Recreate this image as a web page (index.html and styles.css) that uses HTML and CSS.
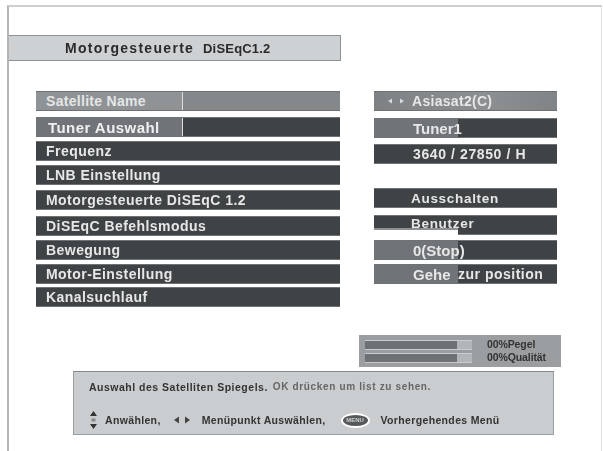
FILE: index.html
```html
<!DOCTYPE html>
<html lang="de">
<head>
<meta charset="utf-8">
<title>Motorgesteuerte DiSEqC1.2</title>
<link rel="stylesheet" href="styles.css">
</head>
<body>
<main class="frame">
  <header class="title"><span class="title-main">Motorgesteuerte</span><span class="title-sub">DiSEqC1.2</span></header>
  <section class="menu">
    <div class="labels">
      <div class="row row-light"><span class="part part-light big1">Satellite Name</span></div>
      <div class="row"><span class="part part-mid big2">Tuner Auswahl</span></div>
      <div class="row"><span class="plain">Frequenz</span></div>
      <div class="row"><span class="plain">LNB Einstellung</span></div>
      <div class="row"><span class="plain">Motorgesteuerte DiSEqC 1.2</span></div>
      <div class="row"><span class="plain">DiSEqC Befehlsmodus</span></div>
      <div class="row"><span class="plain">Bewegung</span></div>
      <div class="row"><span class="plain">Motor-Einstellung</span></div>
      <div class="row"><span class="plain">Kanalsuchlauf</span></div>
    </div>
    <div class="values">
      <div class="row row-light grad"><svg class="dots" viewBox="0 0 18 6" width="18" height="6"><path d="M1 3l4-2.500v5zM17 3l-4-2.500v5z" fill="#d8dadb"/></svg><span class="val val-first">Asiasat2(C)</span></div>
      <div class="row"><span class="seg"><span class="val big">Tuner1</span></span></div>
      <div class="row"><span class="val val-freq">3640 / 27850 / H</span></div>
      <div class="row"><span class="val val-a">Ausschalten</span></div>
      <div class="row row-clip"><span class="val val-a val-up">Benutzer</span><span class="clip"></span></div>
      <div class="row"><span class="seg"><span class="val big">0(Stop)</span></span></div>
      <div class="row"><span class="seg"><span class="val big">Gehe</span></span><span class="rest">zur position</span></div>
    </div>
  </section>
  <section class="signal">
    <div class="bars"><div class="bar"><i></i></div><div class="bar"><i></i></div></div>
    <div class="signal-text"><span>00%Pegel</span><span>00%Qualität</span></div>
  </section>
  <section class="help">
    <p class="help-line"><b>Auswahl des Satelliten Spiegels.</b><span class="soft">OK drücken um list zu sehen.</span></p>
    <p class="help-keys">
      <svg class="ico" viewBox="0 0 9 20" width="9" height="20"><path d="M4.500 1L8 6H1zM1 14h7l-3.500 5z" fill="#333"/><rect x="2.500" y="8.500" width="4" height="3" fill="#888"/></svg>
      <b class="k1">Anwählen,</b>
      <svg class="ico i2" viewBox="0 0 18 8" width="18" height="8"><path d="M1 4l5-3.500v7zM17 4l-5-3.500v7z" fill="#444"/></svg>
      <b class="k2">Menüpunkt Auswählen,</b>
      <span class="oval">MENU</span>
      <b>Vorhergehendes Menü</b>
    </p>
  </section>
</main>
</body>
</html>
```
FILE: styles.css
```css
* { box-sizing: border-box; }
html, body { margin: 0; background: #fff; }
body { width: 603px; height: 451px; overflow: hidden; font-family: "Liberation Sans", Arial, sans-serif; }
.frame {
  margin: 5px 1px 0 7px;
  height: 446px;
  border-top: 2px solid #cfcfcf;
  border-left: 2px solid #b5b5b5;
  border-right: 1px solid #dedede;
  filter: blur(0.6px);
}
.title {
  margin-top: 28px;
  width: 332px;
  height: 26px;
  background: #cdd1d4;
  border: 1px solid #8e9295;
  border-left: 0;
  display: flex;
  align-items: center;
  color: #2a2a2a;
  font-weight: bold;
}
.title-main { margin-left: 56px; font-size: 14px; letter-spacing: 1.3px; width: 138px; white-space: nowrap; }
.title-sub { font-size: 13px; letter-spacing: 0.2px; }
.menu { display: flex; margin: 30px 0 0 27px; gap: 34px; }
.labels, .values { display: grid; }
.labels { width: 304px; grid-template-rows: 26px 24px 24px 25px 26px 24px 24px 23px 20px; }
.values { width: 183px; grid-template-rows: 27px 26px 44px 27px 25px 24px 20px; }
.row {
  height: 20px;
  background: #3f4346;
  border: 1px solid #6e7275;
  border-width: 1px 0;
  color: #e6e8e8;
  font-weight: bold;
  font-size: 14px;
  letter-spacing: 0.45px;
  display: flex;
  align-items: center;
  position: relative;
}
.row-light { background: #84888b; }
.grad { background: linear-gradient(90deg, #7d8184, #8c9093 60%, #808487); }
.part { width: 147px; height: 100%; display: flex; align-items: center; padding-left: 10px; border-right: 1px solid #ddd; white-space: nowrap; }
.part-light { background: #8f9396; }
.part-mid { background: #707478; padding-left: 12px; }
.big1 { font-size: 14px; color: #e4e6e6; letter-spacing: 0.3px; }
.big2 { font-size: 15px; color: #f0f0f0; letter-spacing: 0.45px; }
.plain { padding: 0 0 1px 10px; }
.dots { margin-left: 13px; }
.val { padding-left: 39px; white-space: nowrap; font-size: 13px; letter-spacing: 0.3px; }
.val-first { padding-left: 7px; font-size: 14px; }
.val-freq { font-size: 14px; letter-spacing: 0.6px; }
.val-a { padding-left: 37px; font-size: 13.500px; letter-spacing: 0.7px; }
.val-up { margin-top: -3px; }
.seg { width: 84px; height: 100%; background: #707478; display: flex; align-items: center; }
.big { font-size: 15px; letter-spacing: 0; }
.rest { font-size: 14px; letter-spacing: 0.5px; white-space: nowrap; }
.clip { position: absolute; left: 0; right: 99px; bottom: -1px; height: 7px; background: linear-gradient(#8c9093 0 2px, #fff 2px); }
.signal {
  margin: 28px 0 0 350px;
  width: 202px;
  height: 32px;
  background: #9a9ea1;
  display: flex;
  align-items: center;
  padding: 0 0 0 6px;
}
.bars { width: 107px; display: grid; gap: 3px; }
.bar { height: 10px; background: #b3b6b8; border: 1px solid #c9cbcd; border-width: 1px 0; }
.bar i { display: block; height: 100%; width: 92px; background: #6d7174; }
.signal-text { margin-left: 15px; display: grid; gap: 2px; color: #333; font: bold 10.500px/11px "Liberation Sans", sans-serif; letter-spacing: -0.1px; }
.signal-text span { display: block; }
.help {
  margin: 4px 0 0 64px;
  width: 481px;
  height: 64px;
  background: #c9cdd0;
  border: 1px solid #9a9ea1;
  border-top-color: #85898c;
  padding: 9px 0 0 15px;
  color: #333;
  font-size: 10.500px;
}
.help b { letter-spacing: 0.35px; white-space: nowrap; }
.help-line { margin: 0; display: flex; line-height: 12px; }
.help-line b { letter-spacing: 0.5px; }
.soft { margin-left: 5px; color: #666; letter-spacing: 0.65px; font-weight: bold; font-size: 10px; white-space: nowrap; }
.help-keys { margin: 17px 0 0; display: flex; align-items: center; height: 20px; }
.ico { flex: none; }
.k1 { margin-left: 7px; }
.i2 { margin-left: 12px; }
.k2 { margin-left: 11px; }
.oval {
  margin: 0 11px 0 15px;
  width: 29px;
  height: 15px;
  flex: none;
  border-radius: 50%;
  border: 2px solid #fff;
  background: #55595c;
  color: #cfd2d3;
  font: bold 6px/11px "Liberation Sans", sans-serif;
  text-align: center;
}
```
